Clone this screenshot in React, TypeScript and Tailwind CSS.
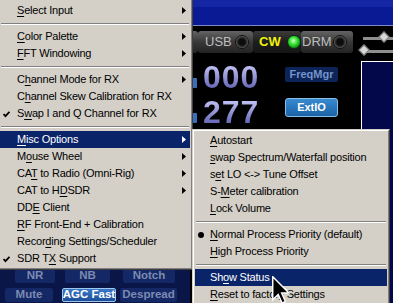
import React from "react";

type Item =
  | { t: string; a: number; arrow?: boolean; check?: boolean; bullet?: boolean; hl?: boolean }
  | "sep";

const mainItems: Item[] = [
  { t: "Select Input", a: 0, arrow: true },
  "sep",
  { t: "Color Palette", a: 0, arrow: true },
  { t: "FFT Windowing", a: 0, arrow: true },
  "sep",
  { t: "Channel Mode for RX", a: 1, arrow: true },
  { t: "Channel Skew Calibration for RX", a: 1 },
  { t: "Swap I and Q Channel for RX", a: 1, check: true },
  "sep",
  { t: "Misc Options", a: 0, arrow: true, hl: true },
  { t: "Mouse Wheel", a: 1, arrow: true },
  { t: "CAT to Radio (Omni-Rig)", a: 2, arrow: true },
  { t: "CAT to HDSDR", a: 8, arrow: true },
  { t: "DDE Client", a: 2 },
  { t: "RF Front-End + Calibration", a: 0 },
  { t: "Recording Settings/Scheduler", a: 5 },
  { t: "SDR TX Support", a: 5, check: true },
];

const subItems: Item[] = [
  { t: "Autostart", a: 0 },
  { t: "swap Spectrum/Waterfall position", a: 0 },
  { t: "set LO <-> Tune Offset", a: 1 },
  { t: "S-Meter calibration", a: 2 },
  { t: "Lock Volume", a: 0 },
  "sep",
  { t: "Normal Process Priority (default)", a: 0, bullet: true },
  { t: "High Process Priority", a: 0 },
  "sep",
  { t: "Show Status", a: 2, hl: true },
  { t: "Reset to factory Settings", a: 0 },
];

function Label({ t, a }: { t: string; a: number }) {
  return (
    <>
      {t.slice(0, a)}
      <span className="underline decoration-1 underline-offset-[2px]">{t[a]}</span>
      {t.slice(a + 1)}
    </>
  );
}

function Sep() {
  return (
    <div className="h-[9px] flex flex-col justify-center px-[1px]">
      <div className="h-px bg-[#808080]" />
      <div className="h-px bg-white" />
    </div>
  );
}

function Row({ item, sub }: { item: Exclude<Item, "sep">; sub?: boolean }) {
  return (
    <div
      className={
        (item.hl ? "bg-[#0a246a] text-white " : "text-black ") +
        (sub ? "pl-[15px] " : "pl-[17px] ") +
        "relative h-[17px] flex items-center whitespace-nowrap tracking-[-0.2px]"
      }
    >
      {item.check && (
        <svg className="absolute left-[3px] top-[6px]" width="7" height="7" viewBox="0 0 7 7">
          <path d="M0.5 3 L2.5 5.2 L6.5 0.8" stroke="currentColor" strokeWidth="1.8" fill="none" />
        </svg>
      )}
      {item.bullet && <span className="absolute left-[3px] top-[6px] w-[6px] h-[6px] rounded-full bg-black" />}
      <span>
        <Label t={item.t} a={item.a} />
      </span>
      {item.arrow && (
        <svg className="absolute left-[182px] top-[5px]" width="4" height="7" viewBox="0 0 4 7">
          <path d="M0 0 L4 3.5 L0 7 Z" fill="currentColor" />
        </svg>
      )}
    </div>
  );
}

function Led({ on }: { on?: boolean }) {
  return (
    <span
      className={
        on
          ? "w-[14px] h-[14px] rounded-full border border-[#0b300b] bg-[radial-gradient(circle_at_45%_40%,#c8ffc0,#34e034_40%,#118a11_75%,#0a4a0a)]"
          : "w-[14px] h-[14px] rounded-full border border-[#111] bg-[radial-gradient(circle_at_50%_50%,#0c0c0c_35%,#303030_55%,#6a6a6a_75%,#2a2a2a)]"
      }
    />
  );
}

function PanelBtn({ label, active, w }: { label: string; active?: boolean; w: string }) {
  return (
    <div
      className={
        (active
          ? "bg-linear-to-b from-[#3a78c8] to-[#1c4f9a] border border-[#9cc6ec] text-white "
          : "bg-[#142866] text-[#7d8bb2] ") +
        w +
        " h-[14px] rounded-[2px] flex items-center justify-center text-[11.5px] font-bold leading-none whitespace-nowrap"
      }
    >
      {label}
    </div>
  );
}

export default function App() {
  return (
    <div className="relative w-[393px] h-[303px] overflow-hidden bg-black font-['Liberation_Sans',Arial,sans-serif] text-[11px]">
      {/* Background application */}
      <div className="flex flex-col h-full">
        <div className="h-[7px] bg-[#1526a4]" />
        <div className="h-[18px] bg-[#0a1a94]" />
        <div className="h-px bg-[#7d89c8]" />
        <div className="flex flex-1">
          {/* left column with bottom panel */}
          <div className="w-[190px] flex flex-col justify-end">
            <div className="h-[35px] bg-[#0a1548] flex flex-col gap-[5px] pt-[1px]">
              <div className="flex">
                <div className="ml-[15px]"><PanelBtn label="NR" w="w-[40px]" /></div>
                <div className="ml-[10px]"><PanelBtn label="NB" w="w-[45px]" /></div>
                <div className="ml-[13px]"><PanelBtn label="Notch" w="w-[52px]" /></div>
              </div>
              <div className="flex">
                <div className="ml-[5px]"><PanelBtn label="Mute" w="w-[48px]" /></div>
                <div className="ml-[9px]"><PanelBtn label="AGC Fast" w="w-[54px]" active /></div>
                <div className="ml-[4px]"><PanelBtn label="Despread" w="w-[57px]" /></div>
              </div>
            </div>
          </div>

          {/* center column */}
          <div className="w-[171px] flex flex-col">
            <div className="mt-[5px] h-[22px] flex items-center">
              <div className="w-[8px] h-[22px] rounded-r-[3px] bg-linear-to-b from-[#646464] via-[#393939] to-[#232323] flex items-center overflow-hidden">
                <span className="-ml-[8px]"><Led /></span>
              </div>
              <div className="w-[55px] h-[22px] rounded-[3px] bg-linear-to-b from-[#646464] via-[#393939] to-[#232323] flex items-center pl-[7px] gap-[3px] text-[13px] text-[#bdbdbd]">
                <span>USB</span>
                <Led />
              </div>
              <div className="w-[48px] h-[22px] rounded-[3px] bg-linear-to-b from-[#3c3c3c] via-[#1e1e1e] to-[#151515] flex items-center pl-[6px] gap-[6px] text-[13px] font-bold text-[#f2f20a]">
                <span>CW</span>
                <Led on />
              </div>
              <div className="w-[52px] h-[22px] rounded-[3px] bg-linear-to-b from-[#646464] via-[#393939] to-[#232323] flex items-center pl-[1px] gap-[1px] text-[13px] text-[#bdbdbd]">
                <span>DRM</span>
                <Led />
              </div>
            </div>

            <div className="mt-[12px] flex items-start h-[24px]">
              <div className="w-[13px] h-[24px] flex items-end pb-[1px]">
                <span className="ml-[2px] w-[5px] h-[10px] bg-[#3b6dbd] rounded-[1px]" />
              </div>
              <div className="w-[60px] text-[32px] leading-[24px] font-bold tracking-[1px] bg-linear-to-b from-[#c4c4f6] to-[#6464b4] bg-clip-text text-transparent">
                000
              </div>
              <div className="ml-[22px] mt-[2px] w-[53px] h-[15px] rounded-[2px] bg-[#0c2458] flex items-center justify-center text-[11px] font-bold text-[#7593c9]">
                FreqMgr
              </div>
            </div>

            <div className="mt-[9px] flex items-start h-[26px]">
              <div className="w-[13px] h-[26px] flex items-end pb-[1px]">
                <span className="ml-[2px] w-[5px] h-[10px] bg-[#3b6dbd] rounded-[1px]" />
              </div>
              <div className="w-[60px] mt-[2px] text-[32px] leading-[24px] font-bold tracking-[1px] bg-linear-to-b from-[#c4c4f6] to-[#6464b4] bg-clip-text text-transparent">
                277
              </div>
              <div className="ml-[22px] w-[53px] h-[19px] rounded-[3px] border border-[#86c0e6] bg-linear-to-b from-[#3a8ad0] to-[#1a62a8] flex items-center justify-center text-[11px] font-bold text-white">
                ExtIO
              </div>
            </div>
          </div>

          {/* right column */}
          <div className="w-[32px] flex flex-col">
            <div className="h-[35px] flex flex-col pl-[2px]">
              <div className="relative mt-[11px] h-[3px] bg-[#8e8e8e]">
                <span className="absolute left-[17px] -top-[4px] w-[8px] h-[8px] rotate-45 bg-[#d8d8d8] border border-[#777]" />
              </div>
              <div className="relative mt-[10px] h-[3px] bg-[#8e8e8e]">
                <span className="absolute -left-[3px] -top-[4px] w-[8px] h-[8px] rotate-45 bg-[#d8d8d8] border border-[#777]" />
              </div>
            </div>
            <div className="flex-1 border-l border-t border-white bg-[#02084a]" />
          </div>
        </div>
      </div>

      {/* Main context menu */}
      <div className="absolute left-0 top-0 w-[193px] bg-[#d4d0c8] border-r border-b border-[#404040]">
        <div className="border-r border-b border-[#808080] pt-[2px] pr-[1px] pb-[1px]">
          {mainItems.map((it, i) => (it === "sep" ? <Sep key={i} /> : <Row key={i} item={it} />))}
        </div>
      </div>

      {/* Submenu */}
      <div className="absolute left-[192px] top-[129px] w-[198px] h-[180px] bg-[#d4d0c8] border-l border-t border-[#d4d0c8] border-r border-r-[#404040]">
        <div className="h-full border-l border-t border-white border-r border-r-[#808080] p-[1px]">
          {subItems.map((it, i) => (it === "sep" ? <Sep key={i} /> : <Row key={i} item={it} sub />))}
        </div>
      </div>

      {/* Mouse cursor */}
      <svg className="absolute left-[272px] top-[276px]" width="18" height="28" viewBox="0 0 12.5 19.5">
        <path
          d="M0.5 0.5 L0.5 16.5 L4.3 12.8 L7 18.8 L9.3 17.8 L6.7 11.9 L11.8 11.9 Z"
          fill="black"
          stroke="white"
          strokeWidth="1"
          strokeLinejoin="miter"
        />
      </svg>
    </div>
  );
}
